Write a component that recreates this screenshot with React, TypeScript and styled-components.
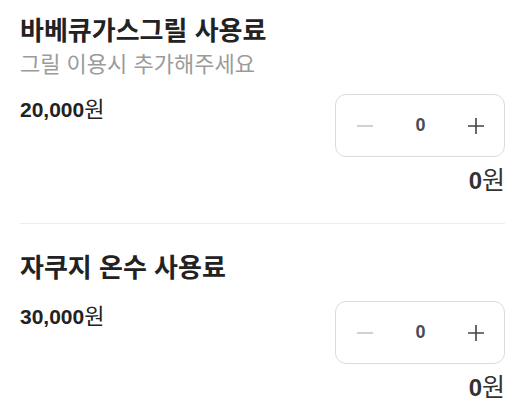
import React, { useState } from 'react';
import styled, { createGlobalStyle } from 'styled-components';

const text = '#222';
const sub = '#9b9b9b';
const line = '#ececec';
const border = '#dcdcdc';

const GlobalStyle = createGlobalStyle`
  body {
    margin: 0;
    background: #fff;
    font-family: "Liberation Sans", "Noto Sans CJK KR", sans-serif;
    color: ${text};
  }
`;

const Page = styled.div`
  width: 516px;
  padding: 0 11px 0 20px;
  box-sizing: border-box;
`;

const Section = styled.section<{ $first?: boolean }>`
  padding: ${(p) => (p.$first ? '14px' : '27px')} 0 27px;
  border-bottom: 1px solid ${line};

  &:last-child {
    border-bottom: 0;
  }
`;

const Title = styled.h2`
  margin: 0;
  font-size: 26px;
  line-height: 34px;
  font-weight: 700;
  color: ${text};
`;

const Desc = styled.p`
  margin: 3px 0 0;
  font-size: 22px;
  line-height: 28px;
  color: ${sub};
`;

const Row = styled.div<{ $tight?: boolean }>`
  display: flex;
  justify-content: space-between;
  align-items: flex-start;
  margin-top: ${(p) => (p.$tight ? '15px' : '16px')};
`;

const Price = styled.div`
  font-size: 22px;
  line-height: 32px;

  b {
    font-size: 21px;
    font-weight: 700;
  }
`;

const Stepper = styled.div`
  width: 170px;
  height: 63px;
  box-sizing: border-box;
  border: 1px solid ${border};
  border-radius: 11px;
  display: flex;
  align-items: center;
  justify-content: space-between;
  padding: 0 18px 0 19px;
`;

const StepButton = styled.button<{ $disabled?: boolean }>`
  border: 0;
  background: none;
  padding: 0;
  width: 20px;
  height: 20px;
  display: flex;
  align-items: center;
  justify-content: center;
  color: ${(p) => (p.$disabled ? '#c6c6c6' : '#444')};
  cursor: pointer;
`;

const Count = styled.span`
  font-size: 18px;
  font-weight: 700;
  color: #4a4a55;
`;

const Total = styled.div`
  margin-top: 8px;
  text-align: right;
  font-size: 25px;
  line-height: 30px;
  color: #333;

  b {
    font-size: 24px;
    font-weight: 700;
  }
`;

const Minus = () => (
  <svg width="18" height="18" viewBox="0 0 18 18">
    <path d="M1 9h16" stroke="currentColor" strokeWidth="1.6" />
  </svg>
);

const Plus = () => (
  <svg width="18" height="18" viewBox="0 0 18 18">
    <path d="M1 9h16M9 1v16" stroke="currentColor" strokeWidth="1.6" />
  </svg>
);

interface Option {
  title: string;
  desc?: string;
  price: number;
}

const options: Option[] = [
  { title: '바베큐가스그릴 사용료', desc: '그릴 이용시 추가해주세요', price: 20000 },
  { title: '자쿠지 온수 사용료', price: 30000 },
];

const OptionItem: React.FC<{ option: Option; first?: boolean }> = ({ option, first }) => {
  const [count, setCount] = useState(0);
  return (
    <Section $first={first}>
      <Title>{option.title}</Title>
      {option.desc && <Desc>{option.desc}</Desc>}
      <Row $tight={first}>
        <Price>
          <b>{option.price.toLocaleString('en-US')}</b>원
        </Price>
        <Stepper>
          <StepButton $disabled={count === 0} onClick={() => setCount(Math.max(0, count - 1))}>
            <Minus />
          </StepButton>
          <Count>{count}</Count>
          <StepButton onClick={() => setCount(count + 1)}>
            <Plus />
          </StepButton>
        </Stepper>
      </Row>
      <Total>
        <b>{(count * option.price).toLocaleString('en-US')}</b>원
      </Total>
    </Section>
  );
};

export default function App() {
  return (
    <Page>
      <GlobalStyle />
      {options.map((o, i) => (
        <OptionItem key={o.title} option={o} first={i === 0} />
      ))}
    </Page>
  );
}
